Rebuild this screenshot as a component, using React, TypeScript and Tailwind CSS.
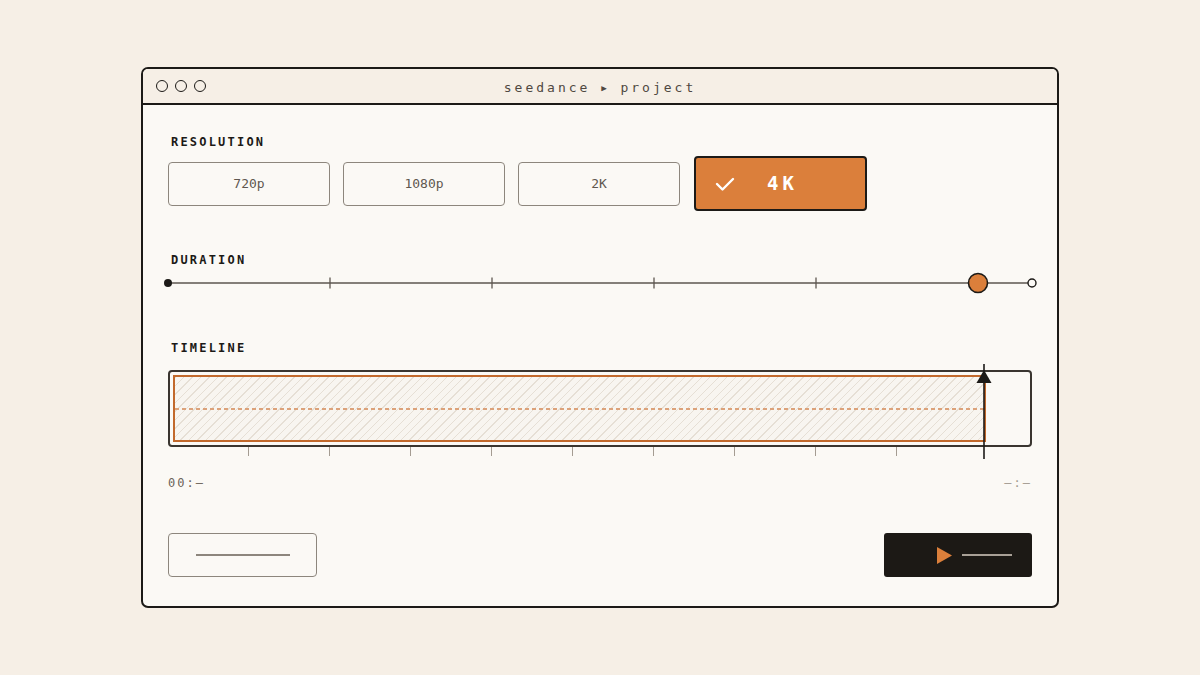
import React from "react"

const mono = "font-['DejaVu_Sans_Mono','Liberation_Mono',monospace]"

function Label({ children }: { children: React.ReactNode }) {
  return (
    <div className={`${mono} pl-[3px] text-[12px] leading-[16px] font-bold tracking-[2.2px] text-[#1c1a17]`}>
      {children}
    </div>
  )
}

function OptionButton({ label }: { label: string }) {
  return (
    <button className={`${mono} w-[162px] h-[44px] rounded-[4px] border-[1.5px] border-[#8d867d] bg-[#fbf9f5] text-[13px] text-[#5f574f]`}>
      {label}
    </button>
  )
}

function DurationSlider() {
  const ticks = [162, 324, 486, 648]
  return (
    <svg width="876" height="22" viewBox="-6 0 876 22" className="block -ml-[6px]">
      <line x1="0" y1="11" x2="864" y2="11" stroke="#5d564f" strokeWidth="1.3" />
      {ticks.map((x) => (
        <line key={x} x1={x} y1="5.5" x2={x} y2="16.5" stroke="#5d564f" strokeWidth="1.3" />
      ))}
      <circle cx="0" cy="11" r="4" fill="#1c1a17" />
      <circle cx="810" cy="11" r="9.5" fill="#db7f3b" stroke="#1c1a17" strokeWidth="1.6" />
      <circle cx="864" cy="11" r="4" fill="#fbf9f5" stroke="#1c1a17" strokeWidth="1.4" />
    </svg>
  )
}

function Timeline() {
  return (
    <div className="relative w-[864px]">
      <div className="h-[77px] rounded-[4px] border-2 border-[#3a3530] p-[3px] pr-0">
        <div className="relative w-[813px] h-full border-2 border-[#c2692c] bg-[repeating-linear-gradient(135deg,#e6dfd5_0px,#e6dfd5_1px,#f8f5f0_1px,#f8f5f0_6px)]">
          <div className="absolute left-0 right-0 top-[31px] h-[1.5px] bg-[repeating-linear-gradient(90deg,#dca27a_0px,#dca27a_4px,transparent_4px,transparent_7px)]" />
        </div>
      </div>
      {/* ruler under the clip */}
      <div className="flex h-[9px]">
        {Array.from({ length: 9 }).map((_, i) => (
          <div key={i} className="w-[81px] shrink-0 border-r-[1.5px] border-[#a49c92]" />
        ))}
      </div>
      {/* playhead */}
      <div className="absolute left-[808px] top-[-6px] w-[16px] h-[95px]">
        <svg width="16" height="95" viewBox="0 0 16 95" className="block">
          <line x1="8" y1="0" x2="8" y2="95" stroke="#1c1a17" strokeWidth="1.6" />
          <polygon points="8,6 15.5,19 0.5,19" fill="#1c1a17" />
        </svg>
      </div>
    </div>
  )
}

export default function App() {
  return (
    <div className="min-h-screen w-full bg-[#f6efe6] pt-[67px]">
      <div className="mx-auto w-[918px] overflow-hidden rounded-[7px] border-2 border-[#1c1a17] bg-[#fbf9f5]">
        {/* title bar */}
        <div className="relative flex h-[36px] items-center border-b-2 border-[#1c1a17] bg-[#f6efe6] pl-[13px]">
          <div className="flex gap-[7px]">
            <span className="h-[12px] w-[12px] rounded-full border-[1.5px] border-[#1c1a17]" />
            <span className="h-[12px] w-[12px] rounded-full border-[1.5px] border-[#1c1a17]" />
            <span className="h-[12px] w-[12px] rounded-full border-[1.5px] border-[#1c1a17]" />
          </div>
          <div className={`${mono} absolute inset-x-0 top-[9px] text-center text-[13px] tracking-[3px] text-[#4f4841] pointer-events-none`}>
            seedance <span className="text-[9px] relative top-[-1px]">▶</span> project
          </div>
        </div>

        <div className="px-[25px] pt-[29px] pb-[29px]">
          <Label>RESOLUTION</Label>
          <div className="mt-[6px] flex h-[55px] items-center gap-[13px]">
            <OptionButton label="720p" />
            <OptionButton label="1080p" />
            <OptionButton label="2K" />
            <button className="ml-px flex h-[55px] w-[173px] items-center rounded-[4px] border-2 border-[#1c1a17] bg-[#db7f3b] pl-[19px]">
              <svg width="20" height="16" viewBox="0 0 20 16" className="block">
                <polyline points="2,8 7.5,13.5 18,3" fill="none" stroke="#fff" strokeWidth="2.4" strokeLinecap="round" strokeLinejoin="round" />
              </svg>
              <span className={`${mono} ml-[32px] text-[19px] font-bold tracking-[4px] text-white`}>4K</span>
            </button>
          </div>

          <div className="mt-[41px]">
            <Label>DURATION</Label>
          </div>
          <div className="mt-[4px]">
            <DurationSlider />
          </div>

          <div className="mt-[46px]">
            <Label>TIMELINE</Label>
          </div>
          <div className="mt-[14px]">
            <Timeline />
          </div>

          <div className={`${mono} mt-[19px] flex justify-between text-[12px] leading-[16px] tracking-[2px]`}>
            <span className="text-[#6b635a]">00:—</span>
            <span className="text-[#a39b91]">—:—</span>
          </div>

          <div className="mt-[42px] flex justify-between">
            <button className="flex h-[44px] w-[149px] items-center justify-center rounded-[4px] border-[1.5px] border-[#8d867d]">
              <span className="block h-[1.5px] w-[94px] bg-[#8d867d]" />
            </button>
            <button className="flex h-[44px] w-[148px] items-center rounded-[3px] bg-[#1c1915] pl-[53px]">
              <svg width="15" height="17" viewBox="0 0 15 17" className="block">
                <polygon points="0,0 15,8.5 0,17" fill="#db7f3b" />
              </svg>
              <span className="ml-[10px] block h-[1.5px] w-[50px] bg-[#a8a096]" />
            </button>
          </div>
        </div>
      </div>
    </div>
  )
}
